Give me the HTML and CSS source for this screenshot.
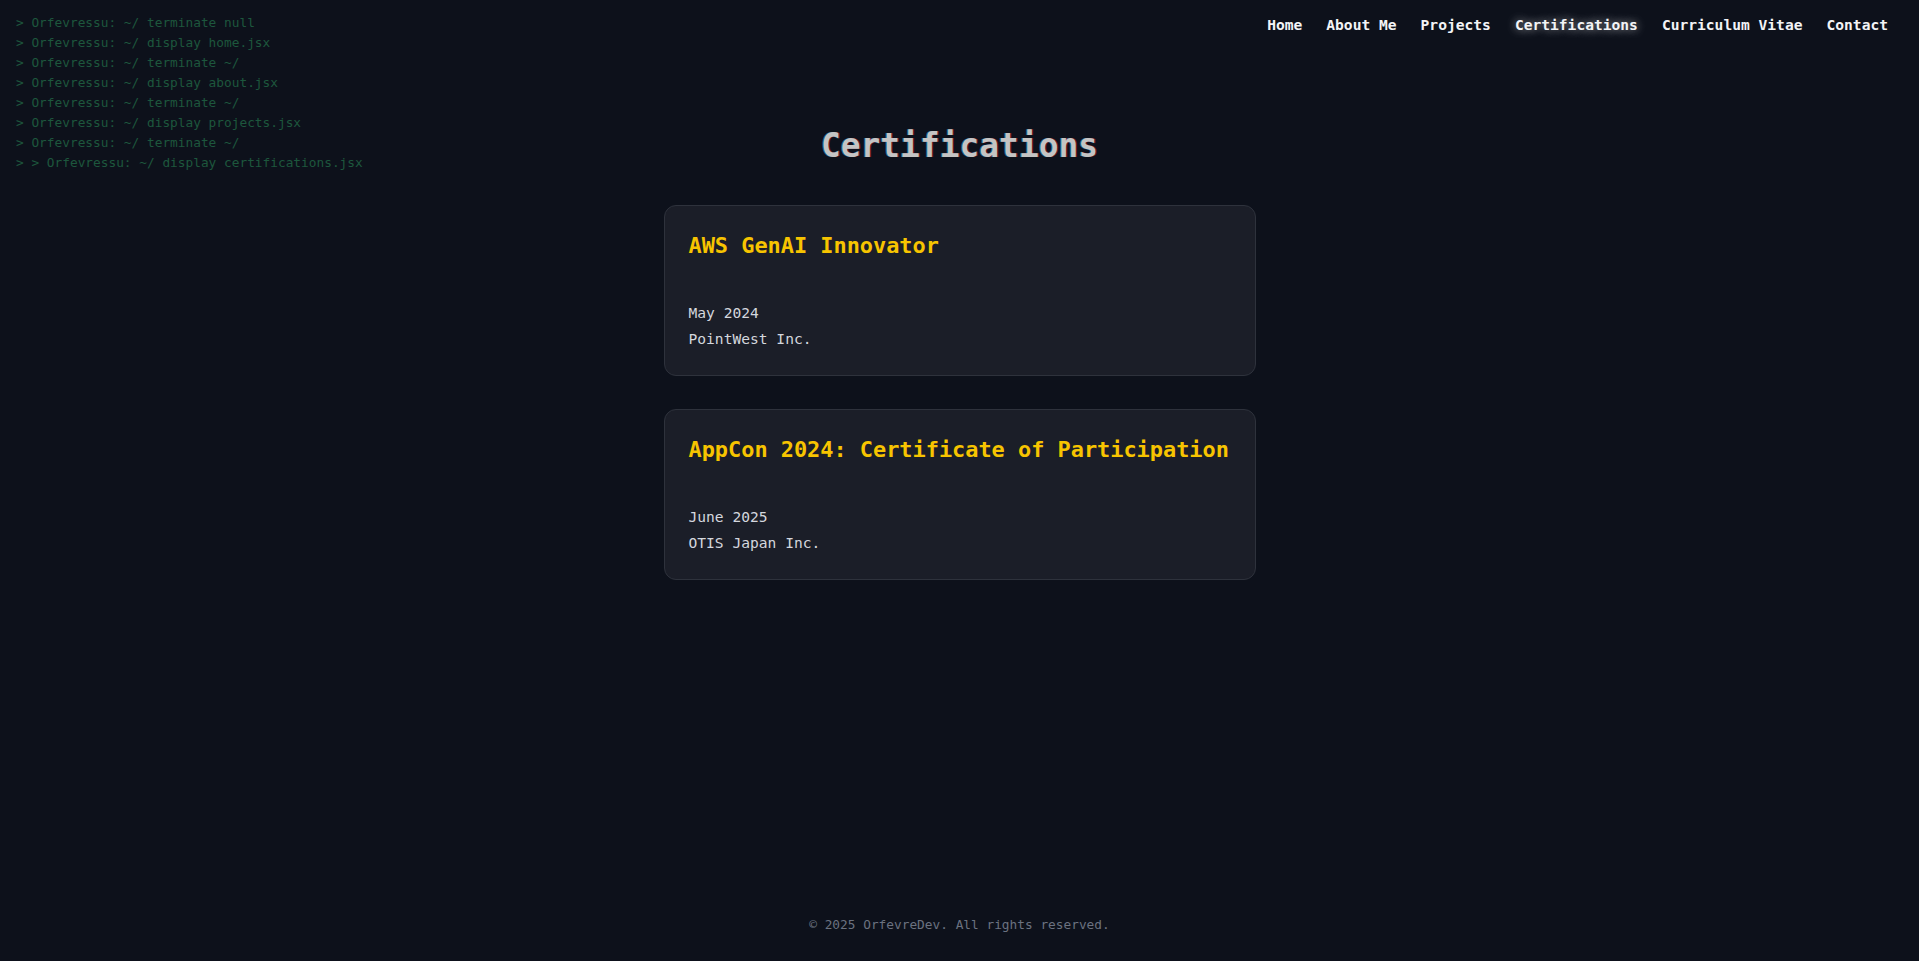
FILE: index.html
```html
<!DOCTYPE html>
<html lang="en">
<head>
<meta charset="utf-8">
<title>Certifications | OrfevreDev</title>
<link rel="stylesheet" href="styles.css">
</head>
<body>
<div class="terminal" aria-hidden="true">
  <div class="term-line">&gt; Orfevressu: ~/ terminate null</div>
  <div class="term-line">&gt; Orfevressu: ~/ display home.jsx</div>
  <div class="term-line">&gt; Orfevressu: ~/ terminate ~/</div>
  <div class="term-line">&gt; Orfevressu: ~/ display about.jsx</div>
  <div class="term-line">&gt; Orfevressu: ~/ terminate ~/</div>
  <div class="term-line">&gt; Orfevressu: ~/ display projects.jsx</div>
  <div class="term-line">&gt; Orfevressu: ~/ terminate ~/</div>
  <div class="term-line">&gt; &gt; Orfevressu: ~/ display certifications.jsx</div>
</div>
<div class="page">
  <nav class="nav">
    <a class="nav-link" href="#">Home</a>
    <a class="nav-link" href="#">About Me</a>
    <a class="nav-link" href="#">Projects</a>
    <a class="nav-link active" href="#">Certifications</a>
    <a class="nav-link" href="#">Curriculum Vitae</a>
    <a class="nav-link" href="#">Contact</a>
  </nav>
  <main class="main">
    <h1 class="page-title">Certifications</h1>
    <div class="cards">
      <div class="card">
        <h2 class="card-title">AWS GenAI Innovator</h2>
        <p class="card-meta">May 2024</p>
        <p class="card-meta">PointWest Inc.</p>
      </div>
      <div class="card">
        <h2 class="card-title">AppCon 2024: Certificate of Participation</h2>
        <p class="card-meta">June 2025</p>
        <p class="card-meta">OTIS Japan Inc.</p>
      </div>
    </div>
  </main>
  <footer class="footer">© 2025 OrfevreDev. All rights reserved.</footer>
</div>
</body>
</html>
```
FILE: styles.css
```css
* { box-sizing: border-box; }

html, body {
  margin: 0;
  padding: 0;
  background: #0d111b;
}

body {
  font-family: "DejaVu Sans Mono", "Liberation Mono", monospace;
  color: #d1d5db;
}

.terminal {
  position: absolute;
  left: 16px;
  top: 13px;
  font-size: 12.8px;
  line-height: 20px;
  color: #1d573d;
  pointer-events: none;
}

.term-line {
  white-space: pre;
}

.page {
  min-height: 100vh;
  display: flex;
  flex-direction: column;
}

.nav {
  display: flex;
  justify-content: flex-end;
  gap: 24px;
  padding: 13px 31px 11px 0;
  height: 48px;
}

.nav-link {
  font-size: 14.6px;
  line-height: 24px;
  font-weight: bold;
  color: #f3f4f6;
  text-decoration: none;
}

.nav-link.active {
  text-shadow: 0 0 8px rgba(255, 255, 255, 0.55), 0 0 16px rgba(255, 255, 255, 0.25);
}

.main {
  flex: 1;
  display: flex;
  flex-direction: column;
  align-items: center;
  padding-top: 78px;
}

.page-title {
  margin: 0 0 39px;
  font-size: 32.9px;
  line-height: 40px;
  font-weight: bold;
  color: #c4c4c4;
  text-shadow: 1px 0 0 rgba(200, 30, 50, 0.55), -1px 0 0 rgba(40, 170, 220, 0.55);
}

.cards {
  display: flex;
  flex-direction: column;
  gap: 33px;
  width: 592px;
}

.card {
  background: #1b1e28;
  border: 1px solid #2e323c;
  border-radius: 12px;
  padding: 24px;
}

.card-title {
  margin: 0 0 38px;
  font-size: 21.9px;
  line-height: 32px;
  font-weight: bold;
  color: #f7c400;
  white-space: nowrap;
}

.card-meta {
  margin: 0;
  font-size: 14.6px;
  line-height: 26px;
  color: #d4d7de;
}

.card-meta:last-child {
  margin-bottom: -1px;
}

.footer {
  text-align: center;
  font-size: 12.8px;
  line-height: 20px;
  color: #6b7280;
  padding: 16px 0 26px;
}
```
